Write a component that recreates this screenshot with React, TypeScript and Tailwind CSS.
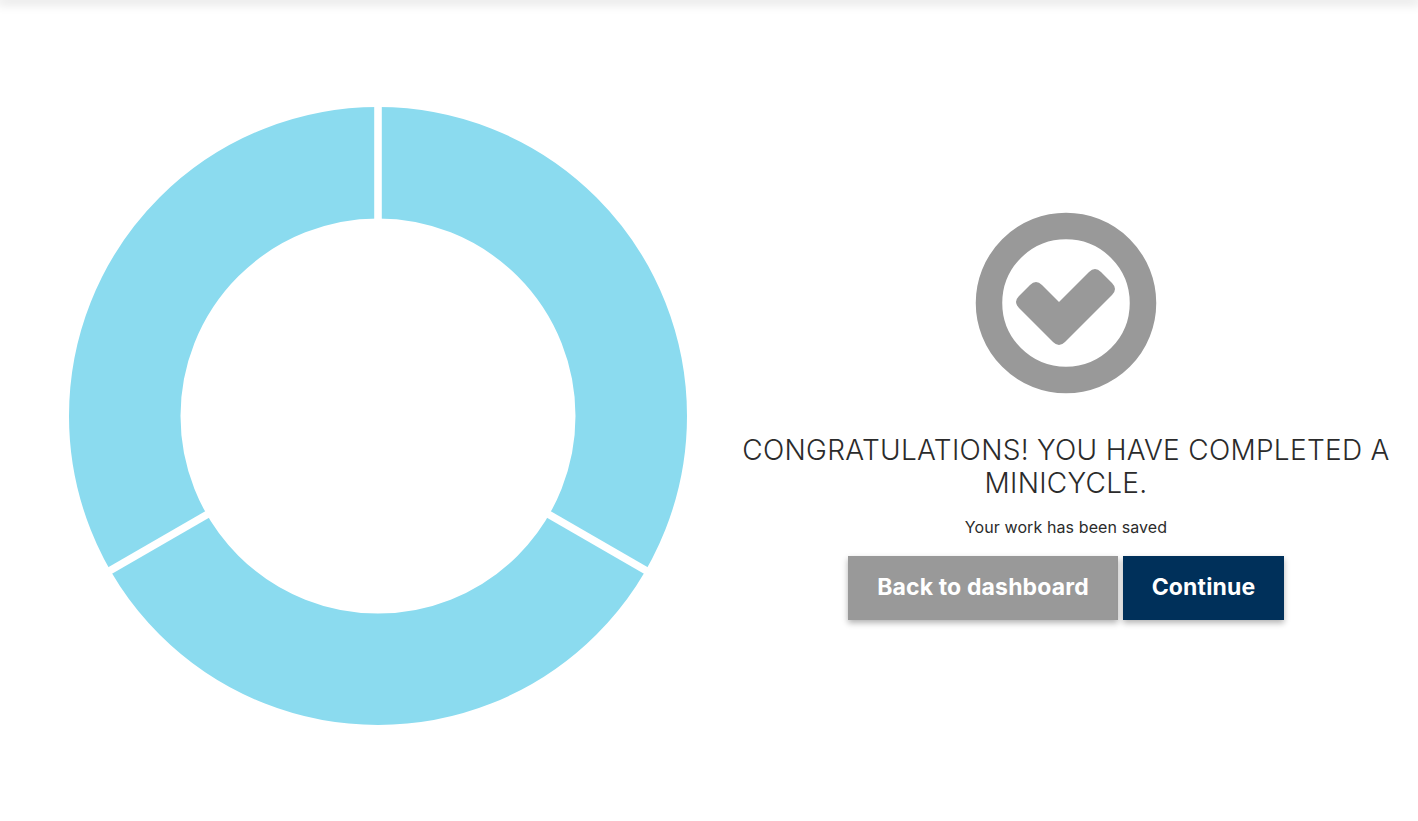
export default function App() {
  return (
    <div className="flex h-[821px] flex-col overflow-hidden bg-white font-['Inter','Liberation_Sans',sans-serif]">
      <div className="h-0 shadow-[0_0_12px_3px_rgba(0,0,0,0.16)]" />
      <main className="flex flex-1 items-center pt-[11px]">
        <div className="w-[736px] pl-[69px]">
          <svg width="618" height="618" viewBox="69 107 618 618" className="block">
            <circle cx="378" cy="416" r="253.25" fill="none" stroke="#8bdbef" strokeWidth="111.5" />
            <path d="M378 100V224" stroke="#fff" strokeWidth="7.6" />
            <path d="M548 514L658 577.5" stroke="#fff" strokeWidth="7.6" />
            <path d="M208 514L98 577.5" stroke="#fff" strokeWidth="7.6" />
          </svg>
        </div>
        <div className="flex w-[660px] flex-col items-center text-center">
          <svg width="182" height="182" viewBox="975 212 182 182" className="block">
            <circle cx="1066" cy="303" r="77" fill="none" stroke="#999999" strokeWidth="26.5" />
            <path
              d="M1059 302L1089 272Q1095 266 1101 272L1112 283Q1118 289 1112 295L1065 342Q1059 348 1053 342L1019 308Q1013 302 1019 296L1030 285Q1036 279 1042 285Z"
              fill="#999999"
            />
          </svg>
          <h1 className="mt-[40px] text-[28px] leading-[33px] font-[350] tracking-[0.3px] text-[#2b2b2b]">
            CONGRATULATIONS! YOU HAVE COMPLETED A MINICYCLE.
          </h1>
          <p className="mt-[15px] text-[16px] leading-[24px] tracking-[0.1px] text-[#2b2b2b]">Your work has been saved</p>
          <div className="mt-[17px] flex gap-[5px]">
            <button className="h-[64px] w-[270px] bg-[#999999] pb-[2px] text-[23px] font-bold tracking-[0.15px] text-white shadow-[0_3px_6px_rgba(0,0,0,0.3)]">
              Back to dashboard
            </button>
            <button className="h-[64px] w-[161px] bg-[#00305a] pb-[2px] text-[23px] font-bold tracking-[0.15px] text-white shadow-[0_3px_6px_rgba(0,0,0,0.3)]">
              Continue
            </button>
          </div>
        </div>
      </main>
    </div>
  )
}
